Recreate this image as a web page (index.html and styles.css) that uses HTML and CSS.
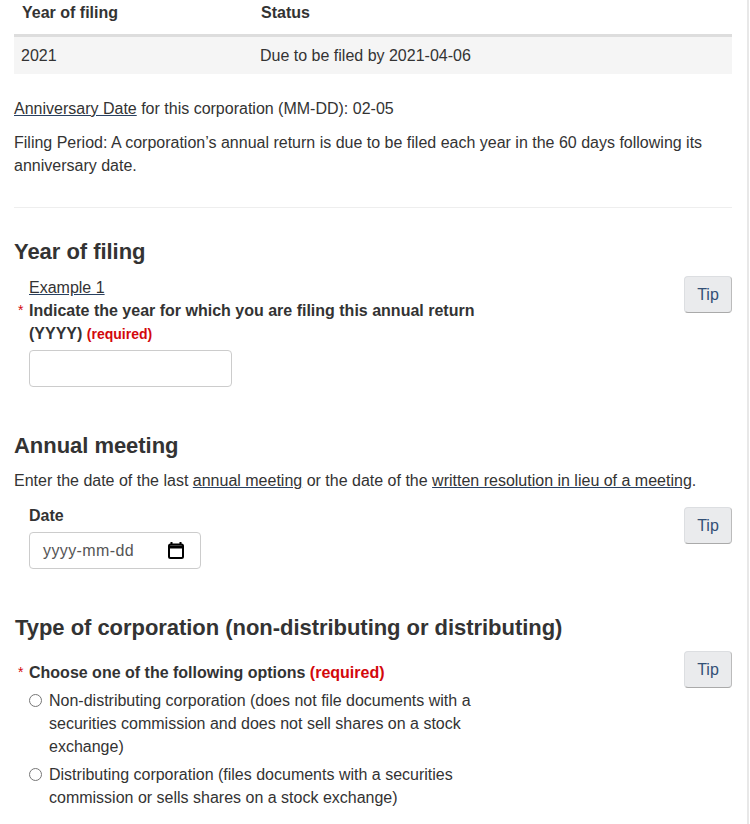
FILE: index.html
```html
<!DOCTYPE html>
<html lang="en">
<head>
<meta charset="UTF-8">
<title>Annual return</title>
<link rel="stylesheet" href="styles.css">
</head>
<body>
<div class="frame">
<div class="page">
    <table class="status-table">
        <thead>
            <tr><th>Year of filing</th><th>Status</th></tr>
        </thead>
        <tbody>
            <tr><td>2021</td><td>Due to be filed by 2021-04-06</td></tr>
        </tbody>
    </table>
    <p class="anniversary"><a href="#">Anniversary Date</a> for this corporation (MM-DD): 02-05</p>
    <p class="period">Filing Period: A corporation’s annual return is due to be filed each year in the 60 days following its anniversary date.</p>
    <hr>

    <h2 class="h-year">Year of filing</h2>
    <div class="row row-year">
        <div class="field">
            <a href="#">Example 1</a>
            <label class="label"><span class="star">*</span>Indicate the year for which you are filing this annual return (YYYY) <strong class="req">(required)</strong></label>
            <input type="text" class="input">
        </div>
        <button type="button" class="tip">Tip</button>
    </div>

    <h2 class="h-meeting">Annual meeting</h2>
    <p class="meeting-text">Enter the date of the last <a href="#">annual meeting</a> or the date of the <a href="#">written resolution in lieu of a meeting</a>.</p>
    <div class="row row-date">
        <div class="field">
            <label class="label">Date</label>
            <div class="date-input">
                <span>yyyy-mm-dd</span>
                <svg width="16" height="17" viewBox="0 0 16 17"><path d="M3.500 0v2.500M12.500 0v2.500" stroke="#000" stroke-width="2" fill="none"/><rect x="1" y="2.500" width="14" height="13.500" rx="1.500" fill="none" stroke="#000" stroke-width="2"/><path d="M1 5h14" stroke="#000" stroke-width="3"/></svg>
            </div>
        </div>
        <button type="button" class="tip">Tip</button>
    </div>

    <h2 class="h-type">Type of corporation (non-distributing or distributing)</h2>
    <div class="row row-type">
        <div class="field field-type">
            <div class="label"><span class="star">*</span>Choose one of the following options <span class="req-big">(required)</span></div>
            <label class="radio"><input type="radio" name="kind"><span>Non-distributing corporation (does not file documents with a securities commission and does not sell shares on a stock exchange)</span></label>
            <label class="radio"><input type="radio" name="kind"><span>Distributing corporation (files documents with a securities commission or sells shares on a stock exchange)</span></label>
        </div>
        <button type="button" class="tip">Tip</button>
    </div>
</div>
</div>
</body>
</html>
```

FILE: styles.css
```css
*{
    box-sizing:border-box;
}
html,body{
    margin:0;
    padding:0;
    background:#fff;
}
body{
    height:824px;
    overflow:hidden;
    font-family:"Liberation Sans",Arial,sans-serif;
    font-size:16px;
    line-height:23px;
    color:#333;
}
a{
    color:#333;
    text-decoration:underline;
    text-decoration-color:#284162;
}
.frame{
    width:749px;
    height:824px;
    border-right:2px solid #e8e8e8;
}
.page{
    width:718px;
    margin-left:14px;
}
.status-table{
    width:100%;
    border-collapse:collapse;
}
.status-table th{
    height:35px;
    padding:0 8px 8px;
    text-align:left;
    font-weight:bold;
    border-bottom:3px solid #ddd;
}
.status-table td{
    height:39px;
    padding:0 7px;
    background:#f5f5f5;
}
.status-table th:first-child,
.status-table td:first-child{
    width:239px;
}
p{
    margin:0;
}
.anniversary{
    margin-top:23px;
}
.period{
    margin-top:11px;
}
hr{
    margin:30px 0 0;
    border:0;
    border-top:1px solid #eee;
}
h2{
    margin:0;
    font-size:22px;
    line-height:26px;
    font-weight:bold;
    letter-spacing:-0.04px;
}
.h-year{
    margin-top:31px;
}
.h-meeting{
    margin-top:46px;
}
.h-type{
    margin-top:46px;
    margin-left:1px;
}
.meeting-text{
    margin-top:10px;
}
.row{
    display:flex;
    justify-content:space-between;
    align-items:flex-start;
}
.row-year{
    margin-top:11px;
}
.row-date{
    margin-top:12px;
}
.row-date .tip{
    margin-top:3px;
}
.row-type{
    margin-top:10px;
}
.field{
    width:475px;
    margin-left:15px;
}
.field-type{
    padding-top:10px;
}
.label{
    position:relative;
    display:block;
    font-weight:bold;
}
.star{
    position:absolute;
    left:-11px;
    color:#d3080c;
    font-weight:normal;
    font-size:14px;
}
.req{
    color:#d3080c;
    font-size:14px;
}
.req-big{
    color:#d3080c;
}
.input,
.date-input{
    display:block;
    height:37px;
    margin-top:4px;
    border:1px solid #ccc;
    border-radius:4px;
    background:#fff;
}
.input{
    width:203px;
}
.date-input{
    display:flex;
    width:172px;
    margin-top:5px;
    align-items:center;
    justify-content:space-between;
    padding:0 16px 0 13px;
    color:#555;
    letter-spacing:0.4px;
}
.radio{
    display:flex;
    align-items:flex-start;
}
.radio input{
    flex:none;
    width:13px;
    height:13px;
    margin:5px 7px 0 0;
}
.field-type .label + .radio{
    margin-top:5px;
}
.radio + .radio{
    margin-top:5px;
}
.tip{
    flex:none;
    width:48px;
    height:37px;
    padding:0;
    font:16px/23px "Liberation Sans",Arial,sans-serif;
    color:#335075;
    background:#eaebed;
    border:1px solid #dcdee1;
    border-bottom-color:#aaa;
    border-right-color:#bbb;
    border-radius:4px;
}
```
